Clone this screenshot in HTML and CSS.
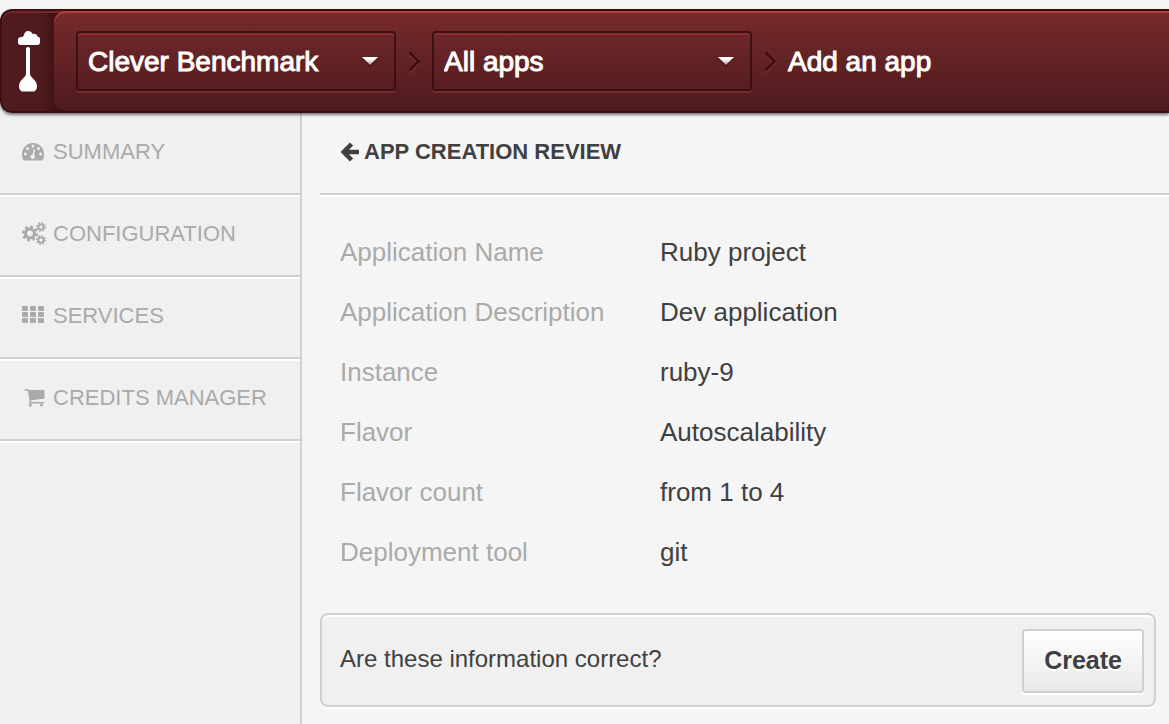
FILE: index.html
```html
<!DOCTYPE html>
<html lang="en">
<head>
<meta charset="utf-8">
<title>App creation review</title>
<link rel="stylesheet" href="styles.css">
</head>
<body>
<header class="topbar">
  <a class="logo" href="#" aria-label="Home">
    <svg width="24" height="62" viewBox="0 0 24 62" fill="#fff">
      <path d="M2.500 14C1 14 0 13 0 11.500v-3C0 7 1.500 6 3 6c1.500 0 2.500-.5 3-2C6.500 1.500 8 0 10 0s4 1 4.500 3c1.500-.5 4.500 0 5 2.500 2 .3 2.500 1.500 2.500 3v3c0 1.500-1 2.500-2.500 2.500z"/>
      <path d="M8 17.500q0-1.500 2-1.500t2 1.500V43c0 3.500 7 6 7 12 0 4-2 5.500-4 5.500H5C3 60.500 1 59 1 55c0-6 7-8.500 7-12z"/>
    </svg>
  </a>
  <nav class="crumbs">
    <select class="picker" aria-label="Organisation"><option>Clever Benchmark</option></select>
    <svg class="sep" width="36" height="24" viewBox="0 0 36 24" fill="none" stroke-width="2.500"><path stroke="#7a2c2e" d="M13.500 5.500l9 9-9 9"/><path stroke="#3c1012" d="M13.500 3.500l9 9-9 9"/></svg>
    <select class="picker" aria-label="Application"><option>All apps</option></select>
    <svg class="sep" width="36" height="24" viewBox="0 0 36 24" fill="none" stroke-width="2.500"><path stroke="#7a2c2e" d="M13.500 5.500l9 9-9 9"/><path stroke="#3c1012" d="M13.500 3.500l9 9-9 9"/></svg>
    <span class="here">Add an app</span>
  </nav>
</header>
<div class="layout">
  <nav class="side">
    <a class="item" href="#">
      <svg class="icon" width="26" height="24" viewBox="0 0 26 24"><path fill="currentColor" d="M1.500 20.500C.5 19 0 17 0 14a11 11 0 0 1 22 0c0 3-.5 5-1.500 6.500z"/><g fill="#f0f0f0"><circle cx="3.300" cy="14" r="1.500"/><circle cx="5.500" cy="8.500" r="1.500"/><circle cx="11" cy="6" r="1.500"/><circle cx="16.500" cy="8.500" r="1.500"/><circle cx="18.700" cy="14" r="1.500"/><circle cx="10.700" cy="16.700" r="2.200"/></g><path d="M10.900 16.500l1.600-7" stroke="#f0f0f0" stroke-width="1.500"/></svg>
      <span>SUMMARY</span>
    </a>
    <a class="item" href="#">
      <svg class="icon" width="26" height="24" viewBox="0 0 26 24" fill="none" stroke="currentColor"><circle cx="8" cy="11.500" r="4.500" stroke-width="3.200"/><circle cx="8" cy="11.500" r="6.800" stroke-width="2.600" stroke-dasharray="2.670 2.670"/><circle cx="19" cy="5" r="2.600" stroke-width="1.900"/><circle cx="19" cy="5" r="4.100" stroke-width="1.600" stroke-dasharray="1.610 1.610"/><circle cx="19" cy="18" r="2.600" stroke-width="1.900"/><circle cx="19" cy="18" r="4.100" stroke-width="1.600" stroke-dasharray="1.610 1.610"/></svg>
      <span>CONFIGURATION</span>
    </a>
    <a class="item" href="#">
      <svg class="icon" width="26" height="24" viewBox="0 0 26 24" fill="currentColor"><rect x="0" y="2" width="6" height="5" rx="1"/><rect x="8" y="2" width="6" height="5" rx="1"/><rect x="16" y="2" width="6" height="5" rx="1"/><rect x="0" y="8" width="6" height="5" rx="1"/><rect x="8" y="8" width="6" height="5" rx="1"/><rect x="16" y="8" width="6" height="5" rx="1"/><rect x="0" y="14" width="6" height="5" rx="1"/><rect x="8" y="14" width="6" height="5" rx="1"/><rect x="16" y="14" width="6" height="5" rx="1"/></svg>
      <span>SERVICES</span>
    </a>
    <a class="item" href="#">
      <svg class="icon" width="26" height="24" viewBox="0 0 26 24"><path fill="currentColor" d="M6 4h15.500q1 0 1 1v6.500q0 1-1 1.200L8 14.500z"/><path d="M3 4h3.500l2.100 11-.8 1.800h13.700" fill="none" stroke="currentColor" stroke-width="1.500" stroke-linejoin="round" stroke-linecap="round"/><circle cx="8.300" cy="19" r="1.600" fill="currentColor"/><circle cx="19.500" cy="19" r="1.600" fill="currentColor"/></svg>
      <span>CREDITS MANAGER</span>
    </a>
  </nav>
  <main class="main">
    <h1 class="title">
      <a class="back" href="#" aria-label="Back"><svg width="20" height="20" viewBox="0 0 20 20" fill="none" stroke="currentColor" stroke-width="4.600"><path d="M11.500 2L3.800 10l7.700 8M4 10h15"/></svg></a>
      <span>APP CREATION REVIEW</span>
    </h1>
    <dl class="review">
      <dt>Application Name</dt><dd>Ruby project</dd>
      <dt>Application Description</dt><dd>Dev application</dd>
      <dt>Instance</dt><dd>ruby-9</dd>
      <dt>Flavor</dt><dd>Autoscalability</dd>
      <dt>Flavor count</dt><dd>from 1 to 4</dd>
      <dt>Deployment tool</dt><dd>git</dd>
    </dl>
    <form class="confirm">
      <p class="question">Are these information correct?</p>
      <button class="create" type="button">Create</button>
    </form>
  </main>
</div>
</body>
</html>
```
FILE: styles.css
```css
* { box-sizing: border-box; }
body {
  margin: 0;
  min-height: 100vh;
  display: flex;
  flex-direction: column;
  padding-top: 9px;
  overflow-x: hidden;
  background: #f5f5f5;
  color: #404040;
  font-family: "Liberation Sans", Helvetica, Arial, sans-serif;
}
a { color: inherit; text-decoration: none; }

.topbar {
  z-index: 1;
  display: flex;
  border: 2px solid #3c1012;
  border-right: 0;
  border-radius: 12px 0 0 12px;
  background: linear-gradient(90deg, #501b1f 36px, #3c1214 56px);
  box-shadow: inset 0 2px #762829, 0 2px 3px rgba(0, 0, 0, 0.5);
}
.logo {
  display: flex;
  width: 52px;
  padding: 20px 0 0 16px;
}
.crumbs {
  flex: 1;
  display: flex;
  align-items: center;
  padding: 20px 22px;
  border-radius: 12px 0 0 12px;
  background: linear-gradient(#772a2b, #4e1a1e);
  box-shadow: inset 0 2px #b04040;
}
.picker {
  appearance: none;
  width: 320px;
  height: 60px;
  padding: 2px 40px 0 10px;
  border: 2px solid #3c1012;
  border-radius: 4px;
  background: url("data:image/svg+xml,%3Csvg xmlns='http://www.w3.org/2000/svg' width='18' height='12'%3E%3Cdefs%3E%3ClinearGradient id='g' x2='0' y2='1'%3E%3Cstop offset='.3' stop-color='white'/%3E%3Cstop offset='1' stop-color='%23b09090'/%3E%3C/linearGradient%3E%3C/defs%3E%3Cpath d='M1 4h16l-8 8z' fill='%23300c0e' opacity='.5'/%3E%3Cpath d='M1 2h16l-8 8z' fill='url(%23g)'/%3E%3C/svg%3E") no-repeat right 15px center;
  box-shadow: inset 0 2px #862f30, 0 2px #762b2d;
  font-family: inherit;
}
.picker, .here {
  color: #fff;
  font-size: 28px;
  line-height: 32px;
  -webkit-text-stroke: 1px #fff;
}
.here { padding-top: 2px; }
.sep { flex: none; }

.layout { flex: 1; display: flex; }
.side {
  width: 302px;
  flex: none;
  border-right: 2px solid #d0d0d0;
  background: #f0f0f0;
}
.item {
  display: flex;
  align-items: center;
  gap: 5px;
  padding: 21px 0 23px 22px;
  border-bottom: 2px solid #d0d0d0;
  box-shadow: 0 2px #fff;
  color: #aaa;
  font-size: 22px;
  line-height: 36px;
}
.icon { flex: none; }

.main { flex: 1; padding-left: 18px; }
.title {
  display: flex;
  align-items: center;
  gap: 4px;
  margin: 0;
  padding: 21px 20px 23px;
  border-bottom: 2px solid #d0d0d0;
  box-shadow: 0 2px #fff;
  font-size: 22px;
  line-height: 36px;
}
.back { display: flex; }
.review {
  display: grid;
  grid-template-columns: 320px 1fr;
  margin: 0;
  padding: 27px 20px 31px;
  font-size: 26px;
  line-height: 60px;
}
.review dt { color: #aaa; }
.review dd { margin: 0; }
.confirm {
  display: flex;
  align-items: center;
  justify-content: space-between;
  margin-right: 13px;
  padding: 14px 10px 12px 18px;
  border: 2px solid #d0d0d0;
  border-radius: 8px;
  background: #f0f0f0;
  box-shadow: inset 0 2px #fff, 0 2px #fff;
}
.question { margin: 0; padding-bottom: 4px; font-size: 24px; line-height: 32px; }
.create {
  padding: 13px 20px 15px;
  border: 2px solid #d0d0d0;
  border-radius: 4px;
  background: linear-gradient(#fff, #e9e9e9);
  box-shadow: 0 2px #fff;
  color: #404040;
  font: bold 25px/32px "Liberation Sans", Helvetica, Arial, sans-serif;
  text-shadow: 0 2px #fff;
}
```
